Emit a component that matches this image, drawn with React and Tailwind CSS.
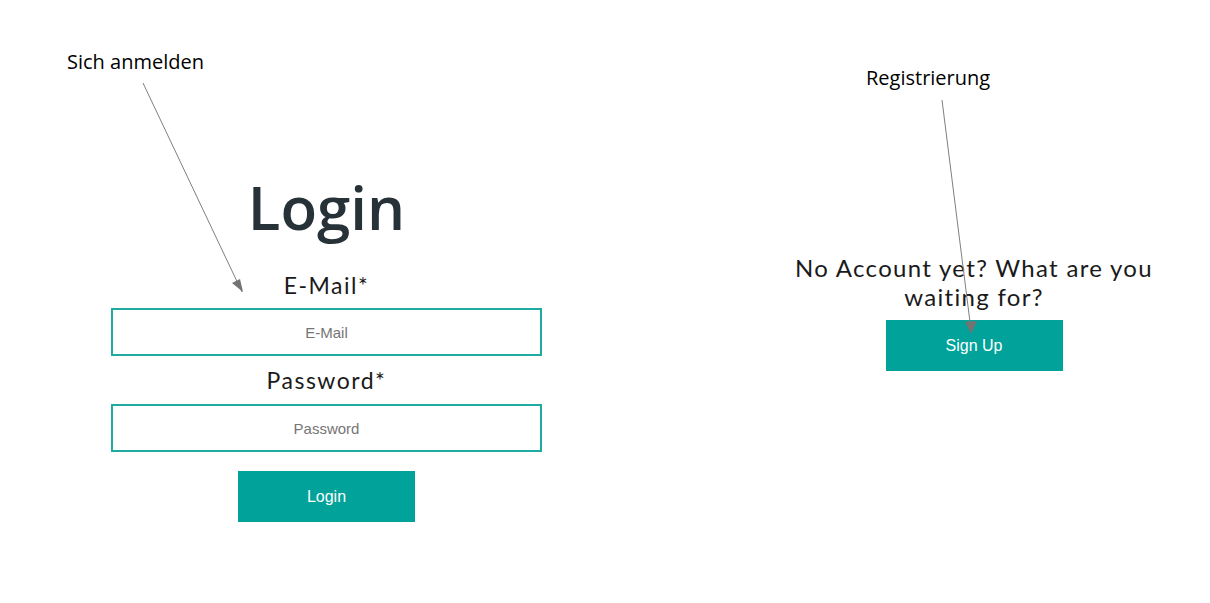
import React from "react";

const Arrows = () => (
  <svg className="pointer-events-none absolute inset-0" width="1210" height="603">
    <line x1="143" y1="83" x2="242" y2="292" stroke="#7f7f7f" strokeWidth="1" />
    <polygon points="243,292 232,283 240,279" fill="#737373" />
    <line x1="942" y1="100" x2="971" y2="330" stroke="#7f7f7f" strokeWidth="1" />
    <polygon points="971,334 965,322 977,321" fill="#737373" />
  </svg>
);

const App = () => {
  return (
    <div className="relative h-[603px] w-[1210px] overflow-hidden bg-white">
      <div className="flex">
        <div className="ml-[111px] flex w-[431px] flex-col items-center pt-[171px]">
          <h1 className="text-[60px] font-semibold leading-[72px] text-[#263238] [font-family:'Open_Sans',sans-serif]">
            Login
          </h1>
          <label className="mt-[28px] text-[23px] leading-[28px] tracking-[1.5px] text-[#1a1a1a] [font-family:'Lato',sans-serif]">
            E-Mail*
          </label>
          <input
            type="text"
            placeholder="E-Mail"
            className="mt-[9px] h-[48px] w-full border-2 border-[#20aba1] text-center text-[15px] placeholder-[#757575] outline-none [font-family:'Liberation_Sans',sans-serif]"
          />
          <label className="mt-[10px] text-[23px] leading-[28px] tracking-[1.5px] text-[#1a1a1a] [font-family:'Lato',sans-serif]">
            Password*
          </label>
          <input
            type="password"
            placeholder="Password"
            className="mt-[10px] h-[48px] w-full border-2 border-[#20aba1] text-center text-[15px] placeholder-[#757575] outline-none [font-family:'Liberation_Sans',sans-serif]"
          />
          <button className="mt-[19px] h-[51px] w-[177px] bg-[#00a29a] text-[16px] text-white [font-family:'Liberation_Sans',sans-serif]">
            Login
          </button>
        </div>

        <div className="ml-[239px] flex w-[386px] flex-col items-center pt-[253px]">
          <p className="text-center text-[24px] leading-[29px] tracking-[1.3px] text-[#1a1a1a] [font-family:'Lato',sans-serif]">
            No Account yet? What are you waiting for?
          </p>
          <button className="mt-[9px] h-[51px] w-[177px] bg-[#00a29a] text-[16px] text-white [font-family:'Liberation_Sans',sans-serif]">
            Sign Up
          </button>
        </div>
      </div>

      <span className="absolute left-[67px] top-[47px] text-[20px] text-black [font-family:'Open_Sans',sans-serif]">
        Sich anmelden
      </span>
      <span className="absolute left-[866px] top-[63px] text-[20px] text-black [font-family:'Open_Sans',sans-serif]">
        Registrierung
      </span>
      <Arrows />
    </div>
  );
};

export default App;
